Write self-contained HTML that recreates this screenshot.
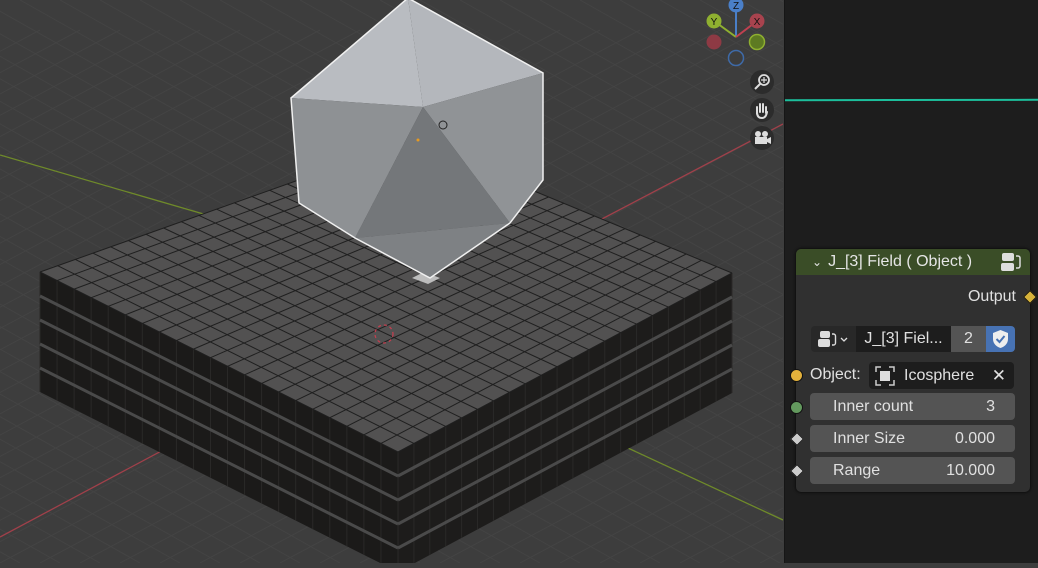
<!DOCTYPE html>
<html><head><meta charset="utf-8"><style>
html,body{margin:0;padding:0;width:1038px;height:563px;overflow:hidden;background:#3d3d3d;font-family:"Liberation Sans",sans-serif}
#vp{position:absolute;left:0;top:0;width:783px;height:563px}
#ne{position:absolute;left:784px;top:0;width:254px;height:563px;background:#1d1d1d;border-left:1px solid #161616}
.node{position:absolute;left:11px;top:249px;width:234px;height:243px;background:#303030;border-radius:5px;box-shadow:0 0 3px #000}
.hdr{height:26px;background:#3a4d27;border-radius:5px 5px 0 0;color:#e6e6e6;font-size:16px;line-height:26px;padding-left:16px}
.t{position:absolute;color:#e0e0e0;font-size:16px;white-space:nowrap}
.fld{position:absolute;left:14px;width:205px;height:27px;background:#545454;border-radius:4px;color:#e0e0e0;font-size:16px;line-height:27px}
.sock{position:absolute;width:11px;height:11px;border-radius:50%;border:1px solid #111}
.dia{position:absolute;width:8px;height:8px;transform:rotate(45deg);border:1px solid #111}
</style></head><body>
<div id="vp"><svg id="s" width="783" height="563" viewBox="0 0 783 563"></svg></div>
<div id="ne">
<div style="position:absolute;left:0;top:99px;width:254px;height:2px;background:#1cbf9c;transform:rotate(-0.1deg)"></div>
<div class="node">
<div class="hdr"><span style="font-size:12px;margin-right:6px">&#8964;</span>J_[3] Field ( Object )
<svg style="position:absolute;right:8px;top:3px" width="22" height="20"><rect x="2" y="1" width="12" height="8" rx="2" fill="#ddd"/><rect x="1" y="11" width="13" height="8" rx="2" fill="#ddd"/><path d="M16 4 h2 a2 2 0 0 1 2 2 v8 a2 2 0 0 1 -2 2 h-2" stroke="#ddd" fill="none" stroke-width="1.5"/></svg></div>
<div class="t" style="right:14px;top:39px">Output</div>
<div class="dia" style="right:-5px;top:43px;background:#d6b23a"></div>
<div style="position:absolute;left:15px;top:77px;width:45px;height:26px;background:#282828;border-radius:4px 0 0 4px"><svg width="45" height="26"><rect x="9" y="5" width="10" height="7" rx="2" fill="#ddd"/><rect x="7" y="13" width="12" height="8" rx="2" fill="#ddd"/><path d="M21 8h1.5a2 2 0 0 1 2 2v7a2 2 0 0 1-2 2h-1.5" stroke="#ddd" fill="none" stroke-width="1.4"/><path d="M30 12l3 3 3-3" stroke="#ddd" fill="none" stroke-width="1.3"/></svg></div>
<div style="position:absolute;left:60px;top:77px;width:95px;height:26px;background:#1d1d1d;color:#e0e0e0;font-size:16px;line-height:26px;text-align:center">J_[3] Fiel...</div>
<div style="position:absolute;left:155px;top:77px;width:35px;height:26px;background:#545454;color:#e0e0e0;font-size:16px;line-height:26px;text-align:center">2</div>
<div style="position:absolute;left:190px;top:77px;width:29px;height:26px;background:#4772b3;border-radius:0 4px 4px 0"><svg width="29" height="26"><path d="M14.5 4 L22 7 V13 C22 18 18 21 14.5 22 C11 21 7 18 7 13 V7 Z" fill="#eee"/><path d="M10.5 13l3 3 5-6" stroke="#4772b3" stroke-width="2" fill="none"/></svg></div>
<div class="sock" style="left:-6px;top:120px;background:#e3b13c"></div>
<div class="t" style="left:14px;top:117px">Object:</div>
<div style="position:absolute;left:73px;top:113px;width:145px;height:27px;background:#1d1d1d;border-radius:4px;color:#e0e0e0;font-size:16px;line-height:27px"><svg style="position:absolute;left:6px;top:4px" width="20" height="20"><path d="M1 6V1h5M14 1h5v5M19 14v5h-5M6 19H1v-5" stroke="#ccc" fill="none" stroke-width="1.5"/><rect x="5" y="5" width="10" height="10" fill="#ddd"/></svg><span style="position:absolute;left:35px">Icosphere</span><span style="position:absolute;right:8px;font-size:17px">✕</span></div>
<div class="sock" style="left:-6px;top:152px;background:#63995e"></div>
<div class="fld" style="top:144px"><span style="position:absolute;left:23px">Inner count</span><span style="position:absolute;right:20px">3</span></div>
<div class="dia" style="left:-4px;top:185px;background:#ccc"></div>
<div class="fld" style="top:176px"><span style="position:absolute;left:23px">Inner Size</span><span style="position:absolute;right:20px">0.000</span></div>
<div class="dia" style="left:-4px;top:217px;background:#ccc"></div>
<div class="fld" style="top:208px"><span style="position:absolute;left:23px">Range</span><span style="position:absolute;right:20px">10.000</span></div>
</div>
</div>
<script>
var s=document.getElementById('s'),h='';
function L(x1,y1,x2,y2,c,w){h+='<line x1="'+x1+'" y1="'+y1+'" x2="'+x2+'" y2="'+y2+'" stroke="'+c+'" stroke-width="'+(w||1)+'"/>';}
function P(p,f,st){h+='<polygon points="'+p+'" fill="'+f+'"'+(st?' stroke="'+st+'" stroke-width="1.5"':'')+'/>';}
for(var i=-40;i<60;i++){var x=i*40;L(x-600,563,x+400,30,'#444');L(x-300,0,x+700,563,'#444');}
L(0,537,212,424,'#a0404a',1.3);L(600,220,783,124,'#a0404a',1.3);
L(0,155,300,242,'#6f8a2a',1.3);L(574,423,783,520,'#6f8a2a',1.3);
var A=[40,272],Bk=[411,140],R=[732,273],F=[398,452],H=120,N=21;
P([A,F,[F[0],F[1]+H],[A[0],A[1]+H]].join(' '),'#1b1a19');
P([F,R,[R[0],R[1]+H],[F[0],F[1]+H]].join(' '),'#1d1c1b');
for(var j=0;j<=N;j++){var t=j/N;var x1=A[0]+(F[0]-A[0])*t,y1=A[1]+(F[1]-A[1])*t;L(x1,y1,x1,y1+H,'#2a2928');var x2=F[0]+(R[0]-F[0])*t,y2=F[1]+(R[1]-F[1])*t;L(x2,y2,x2,y2+H,'#2a2928');}
for(var k=1;k<5;k++){var d=k*24;L(A[0],A[1]+d,F[0],F[1]+d,'#4a4a4a',3);L(F[0],F[1]+d,R[0],R[1]+d,'#4a4a4a',3);}
P([A,Bk,R,F].join(' '),'#525151');
for(var j=0;j<=N;j++){var t=j/N;
L(A[0]+(Bk[0]-A[0])*t,A[1]+(Bk[1]-A[1])*t,F[0]+(R[0]-F[0])*t,F[1]+(R[1]-F[1])*t,'#1f1f1f');
L(A[0]+(F[0]-A[0])*t,A[1]+(F[1]-A[1])*t,Bk[0]+(R[0]-Bk[0])*t,Bk[1]+(R[1]-Bk[1])*t,'#1f1f1f');}
P('412,278 428,284 440,278 424,272','#bdbdbd');
h+='<circle cx="384" cy="334" r="9" fill="none" stroke="#c04050" stroke-dasharray="3 3" stroke-width="1.3"/>';
var T='408,-2',Lf='291,98',Rt='543,73',C='423,107',BL='299,203',Bl='355,238',B='430,278',BR='510,223',Rm='543,180';
P([T,Lf,C].join(' '),'#b9bcc1');P([T,C,Rt].join(' '),'#b4b7bc');
P([Lf,C,Bl,BL].join(' '),'#8e9194');P([C,Rt,Rm,BR].join(' '),'#909396');
P([C,Bl,BR].join(' '),'#74777a');P([Bl,B,BR].join(' '),'#7e8184');
P([T,Lf,BL,Bl,B,BR,Rm,Rt].join(' '),'none','#f0f0f0');
h+='<circle cx="418" cy="140" r="1.5" fill="#e89a20"/><circle cx="443" cy="125" r="4" fill="none" stroke="#222"/>';
L(736,37,736,8,'#4a7fc8',2);L(736,37,714,21,'#8fb030',2);L(736,37,757,21,'#c04050',2);
function G(x,y,f,st,tx){h+='<circle cx="'+x+'" cy="'+y+'" r="7.5" fill="'+f+'"'+(st?' stroke="'+st+'" stroke-width="1.5"':'')+'/>';if(tx)h+='<text x="'+x+'" y="'+(y+4)+'" font-size="10" text-anchor="middle" font-family="Liberation Sans" fill="#111">'+tx+'</text>';}
G(714,42,'#8e3a44');G(757,42,'#5d7a22','#8fb030');G(736,58,'#3d3d3d','#3e6aa8');
G(736,5,'#4a7fc8',0,'Z');G(714,21,'#8fb030',0,'Y');G(757,21,'#a8434e',0,'X');
[82,110,138].forEach(function(y){h+='<circle cx="762" cy="'+y+'" r="12" fill="#2c2c2c"/>';});
h+='<circle cx="764" cy="80" r="5" fill="none" stroke="#ddd" stroke-width="1.8"/><path d="M764 77v6M761 80h6" stroke="#ddd" stroke-width="1.2"/><line x1="760" y1="84" x2="755" y2="89" stroke="#ddd" stroke-width="2"/>';
h+='<path d="M757 114 v-7 M760 112 v-8 M763 112 v-8 M766 113 v-6 M757 112 q0 6 5 6 q4 0 5 -6" stroke="#ddd" stroke-width="2" fill="none" stroke-linecap="round"/>';
h+='<circle cx="758" cy="134" r="3" fill="#ddd"/><circle cx="765" cy="134" r="3" fill="#ddd"/><rect x="755" y="137" width="12" height="7" fill="#ddd"/><path d="M767 139 l4 -2 v7 l-4 -2z" fill="#ddd"/>';
s.innerHTML=h;
</script>
</body></html>
